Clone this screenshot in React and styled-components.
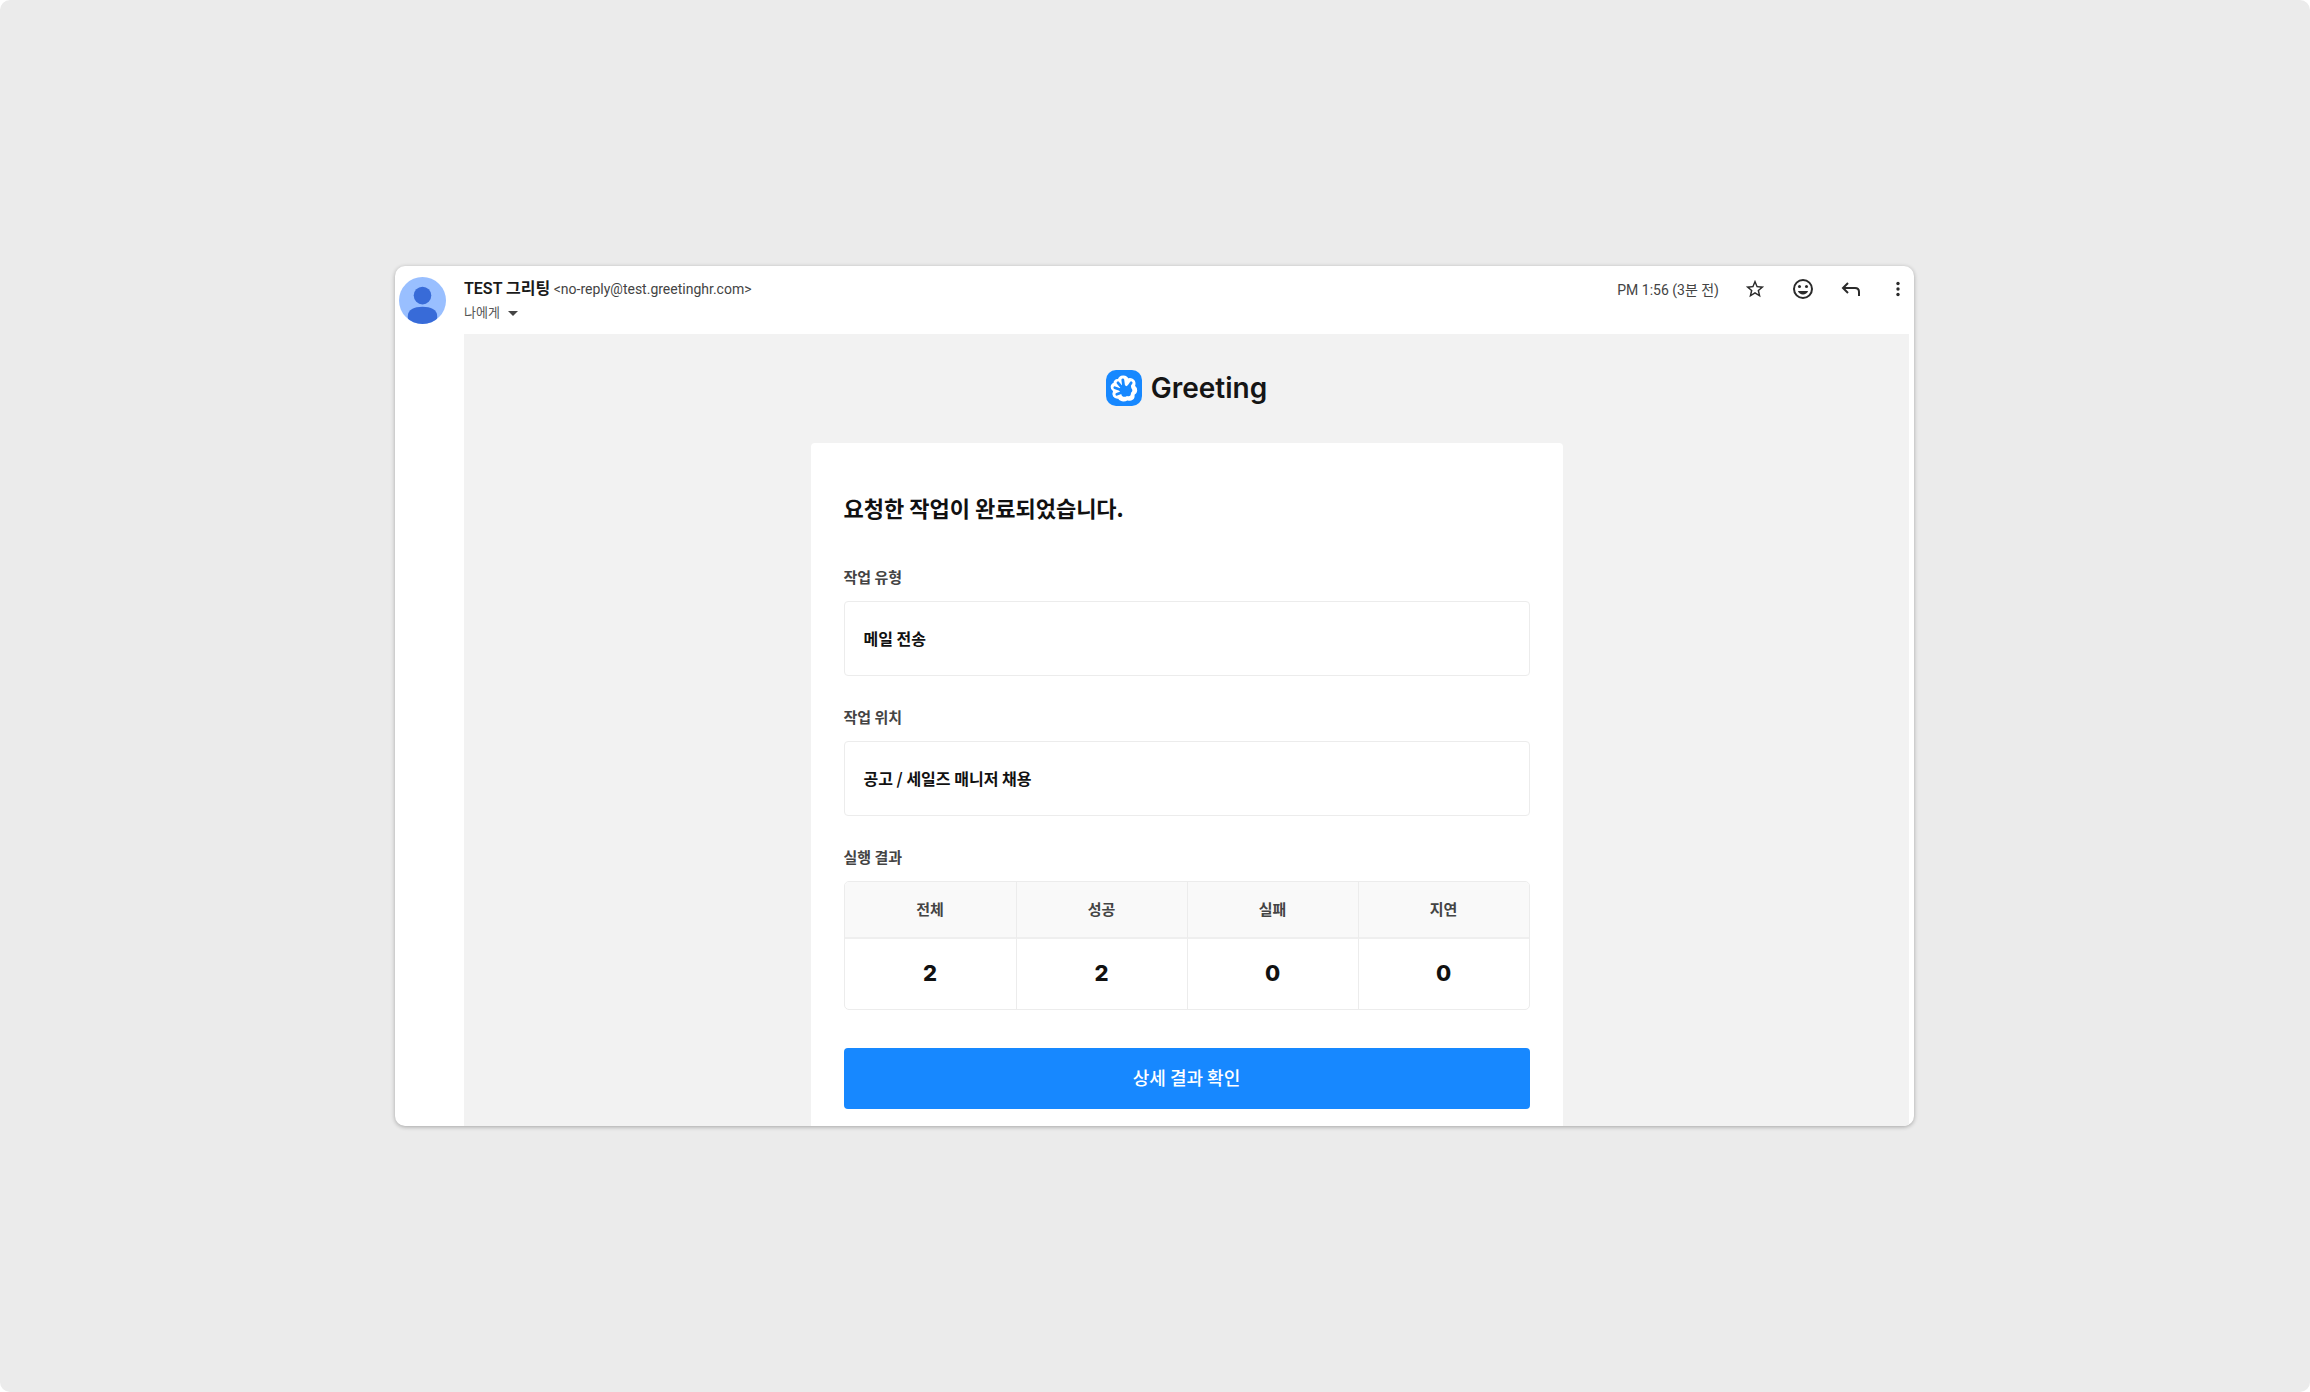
import React from "react";
import styled, { createGlobalStyle } from "styled-components";

const GlobalStyle = createGlobalStyle`
  * {
    box-sizing: border-box;
    margin: 0;
  }
  body {
    background: #fff;
    color: #111;
    font-family: Roboto, "Noto Sans CJK KR", sans-serif;
  }
  button {
    font-family: inherit;
  }
`;

const Page = styled.main`
  min-height: 100vh;
  padding: 266px 396px 266px 395px;
  border-radius: 10px;
  background: #ebebeb;
`;

const Mail = styled.article`
  overflow: hidden;
  border-radius: 10px;
  background: #fff;
  box-shadow: 0 1px 4px rgba(0, 0, 0, 0.3);
`;

const MailHeader = styled.header`
  display: flex;
  align-items: flex-start;
  justify-content: space-between;
  padding: 11px 5px 9px 4px;
  color: #444;
`;

const Sender = styled.div`
  display: flex;
  gap: 18px;

  .avatar {
    width: 47px;
    height: 47px;
  }
`;

const SenderLine = styled.p`
  font-size: 14px;
  line-height: 24px;
  white-space: nowrap;

  strong {
    color: #1a1a1a;
    font-size: 16px;
    font-weight: 600;
  }
`;

const Recipient = styled.button`
  display: flex;
  align-items: center;
  gap: 8px;
  padding: 0;
  border: 0;
  background: none;
  color: #555;
  font-size: 13px;
  line-height: 24px;
  cursor: pointer;
`;

const Actions = styled.div`
  display: flex;
  align-items: center;
  height: 24px;
  gap: 24px;

  time {
    font-size: 14px;
    white-space: nowrap;
  }
`;

const IconButton = styled.button`
  display: flex;
  align-items: center;
  justify-content: center;
  width: ${({ $narrow }) => ($narrow ? "22px" : "24px")};
  height: 24px;
  padding: 0;
  border: 0;
  background: none;
  color: #2b2b2b;
  cursor: pointer;
`;

const MailBody = styled.div`
  margin: 0 5px 0 69px;
  padding-top: 36px;
  background: #f2f2f2;
`;

const Brand = styled.div`
  display: flex;
  align-items: center;
  justify-content: center;
  gap: 9px;
  height: 36px;
  margin-bottom: 37px;
  color: #151515;
  font-family: Inter, sans-serif;
  font-size: 28px;
  font-weight: 600;
`;

const Card = styled.section`
  max-width: 752px;
  margin: 0 auto;
  padding: 48px 33px 17px;
  border-radius: 4px 4px 0 0;
  background: #fff;
  font-family: "Noto Sans CJK KR", sans-serif;

  h1 {
    margin-bottom: 42px;
    font-size: 22px;
    font-weight: 700;
    line-height: 32px;
  }
`;

const Label = styled.h2`
  margin-bottom: 12px;
  color: #444;
  font-size: 15px;
  font-weight: 700;
  line-height: 24px;
`;

const ValueBox = styled.p`
  margin-bottom: 29px;
  padding: 24px 19px 25px;
  border: 1px solid #ececec;
  border-radius: 4px;
  font-size: 16px;
  font-weight: 700;
  line-height: 24px;
`;

const ResultTable = styled.table`
  width: 100%;
  margin-bottom: 38px;
  border: 1px solid #ececec;
  border-radius: 5px;
  border-spacing: 0;
  table-layout: fixed;
  overflow: hidden;

  th,
  td {
    padding: 0 0 2px;
    text-align: center;
  }
  th {
    height: 57px;
    border-bottom: 2px solid #efefef;
    background: #f9f9f9;
    color: #444;
    font-size: 15px;
    font-weight: 700;
  }
  td {
    height: 70px;
    font-family: Inter, sans-serif;
    font-size: 22px;
    font-weight: 800;
  }
  th + th,
  td + td {
    border-left: 1px solid #ececec;
  }
`;

const DetailLink = styled.a`
  display: block;
  padding-bottom: 2px;
  border-radius: 4px;
  background: #1788ff;
  color: #fff;
  font-size: 18px;
  font-weight: 500;
  line-height: 59px;
  text-align: center;
  text-decoration: none;
`;

const Avatar = () => (
  <svg className="avatar" viewBox="0 0 48 48" aria-hidden="true">
    <defs>
      <clipPath id="avatar-clip">
        <circle cx="24" cy="24" r="24" />
      </clipPath>
    </defs>
    <g clipPath="url(#avatar-clip)">
      <rect width="48" height="48" fill="#99bfff" />
      <circle cx="24" cy="19" r="9" fill="#386bd8" />
      <path
        d="M9 48V40C9 33.5 15.500 30.500 24 30.500S39 33.500 39 40V48Z"
        fill="#386bd8"
      />
    </g>
  </svg>
);

const BrandMark = () => (
  <svg width="36" height="36" viewBox="0 0 36 36" aria-hidden="true">
    <rect width="36" height="36" rx="10" fill="#1788ff" />
    <path
      d="M12.500 10C13.500 5 20.500 5 21.800 9.200C26.500 7.800 30 11.500 28.300 16C31.500 18.500 31 23 27.800 24.500C28.500 29 25 31 21.500 29.500C18 31.500 13.500 31 12.500 27.800C8 28.500 6 25 7.800 21C4.300 18.500 4.800 14.500 8.200 13.500C8 10.800 10 9.300 12.500 10Z"
      fill="#fff"
      stroke="#fff"
      strokeWidth="1.500"
      strokeLinejoin="round"
    />
    <path
      d="M18 19L16.800 9.800M18 20L12 12.800M18 21L8.800 17.800M17 22L10.800 24.300M21 19L25.200 12.800"
      fill="none"
      stroke="#1788ff"
      strokeWidth="2.800"
      strokeLinecap="round"
    />
    <path
      d="M17 14L20.500 16.300L24.500 13.500L25.300 18C27 20 26.500 21.500 25 22.800C25 26 23.500 27 21 26C18.500 27.500 16 27 15.500 24.800L13 20Z"
      fill="#1788ff"
    />
  </svg>
);

const results = [
  { name: "전체", count: 2 },
  { name: "성공", count: 2 },
  { name: "실패", count: 0 },
  { name: "지연", count: 0 },
];

const App = () => {
  return (
    <>
      <GlobalStyle />
      <Page>
        <Mail>
          <MailHeader>
            <Sender>
              <Avatar />
              <div>
                <SenderLine>
                  <strong>TEST 그리팅</strong> &lt;no-reply@test.greetinghr.com&gt;
                </SenderLine>
                <Recipient type="button">
                  나에게
                  <svg width="10" height="5" viewBox="0 0 10 5" aria-hidden="true">
                    <path d="M0 0H10L5 5Z" fill="#444" />
                  </svg>
                </Recipient>
              </div>
            </Sender>
            <Actions>
              <time>PM 1:56 (3분 전)</time>
              <IconButton type="button" aria-label="별표">
                <svg width="22" height="22" viewBox="0 0 24 24" fill="currentColor">
                  <path d="M22 9.240l-7.190-.620L12 2 9.190 8.630 2 9.240l5.460 4.730L5.820 21 12 17.270 18.180 21l-1.630-7.030L22 9.240zM12 15.400l-3.760 2.270 1-4.280-3.320-2.880 4.380-.380L12 6.100l1.710 4.040 4.380.380-3.320 2.880 1 4.280L12 15.400z" />
                </svg>
              </IconButton>
              <IconButton type="button" aria-label="이모티콘 반응">
                <svg width="24" height="24" viewBox="0 0 24 24" fill="currentColor">
                  <circle
                    cx="12"
                    cy="12"
                    r="9"
                    fill="none"
                    stroke="currentColor"
                    strokeWidth="2"
                  />
                  <circle cx="8.500" cy="9.500" r="1.500" />
                  <circle cx="15.500" cy="9.500" r="1.500" />
                  <path d="M6.900 14H17.100C16.300 16.100 14.300 17.500 12 17.500S7.700 16.100 6.900 14Z" />
                </svg>
              </IconButton>
              <IconButton type="button" aria-label="답장">
                <svg
                  width="24"
                  height="24"
                  viewBox="0 0 24 24"
                  fill="none"
                  stroke="currentColor"
                  strokeWidth="2"
                >
                  <path d="M9 6L4 11L9 16" />
                  <path d="M4 11H16C18.500 11 20 12.500 20 15V19" />
                </svg>
              </IconButton>
              <IconButton type="button" aria-label="더보기" $narrow>
                <svg width="20" height="20" viewBox="0 0 20 20" fill="currentColor">
                  <circle cx="10" cy="4.500" r="1.700" />
                  <circle cx="10" cy="10" r="1.700" />
                  <circle cx="10" cy="15.500" r="1.700" />
                </svg>
              </IconButton>
            </Actions>
          </MailHeader>
          <MailBody>
            <Brand>
              <BrandMark />
              Greeting
            </Brand>
            <Card>
              <h1>요청한 작업이 완료되었습니다.</h1>
              <Label>작업 유형</Label>
              <ValueBox>메일 전송</ValueBox>
              <Label>작업 위치</Label>
              <ValueBox>공고 / 세일즈 매니저 채용</ValueBox>
              <Label id="result-label">실행 결과</Label>
              <ResultTable aria-labelledby="result-label">
                <thead>
                  <tr>
                    {results.map(({ name }) => (
                      <th key={name} scope="col">
                        {name}
                      </th>
                    ))}
                  </tr>
                </thead>
                <tbody>
                  <tr>
                    {results.map(({ name, count }) => (
                      <td key={name}>{count}</td>
                    ))}
                  </tr>
                </tbody>
              </ResultTable>
              <DetailLink href="#">상세 결과 확인</DetailLink>
            </Card>
          </MailBody>
        </Mail>
      </Page>
    </>
  );
};

export default App;
